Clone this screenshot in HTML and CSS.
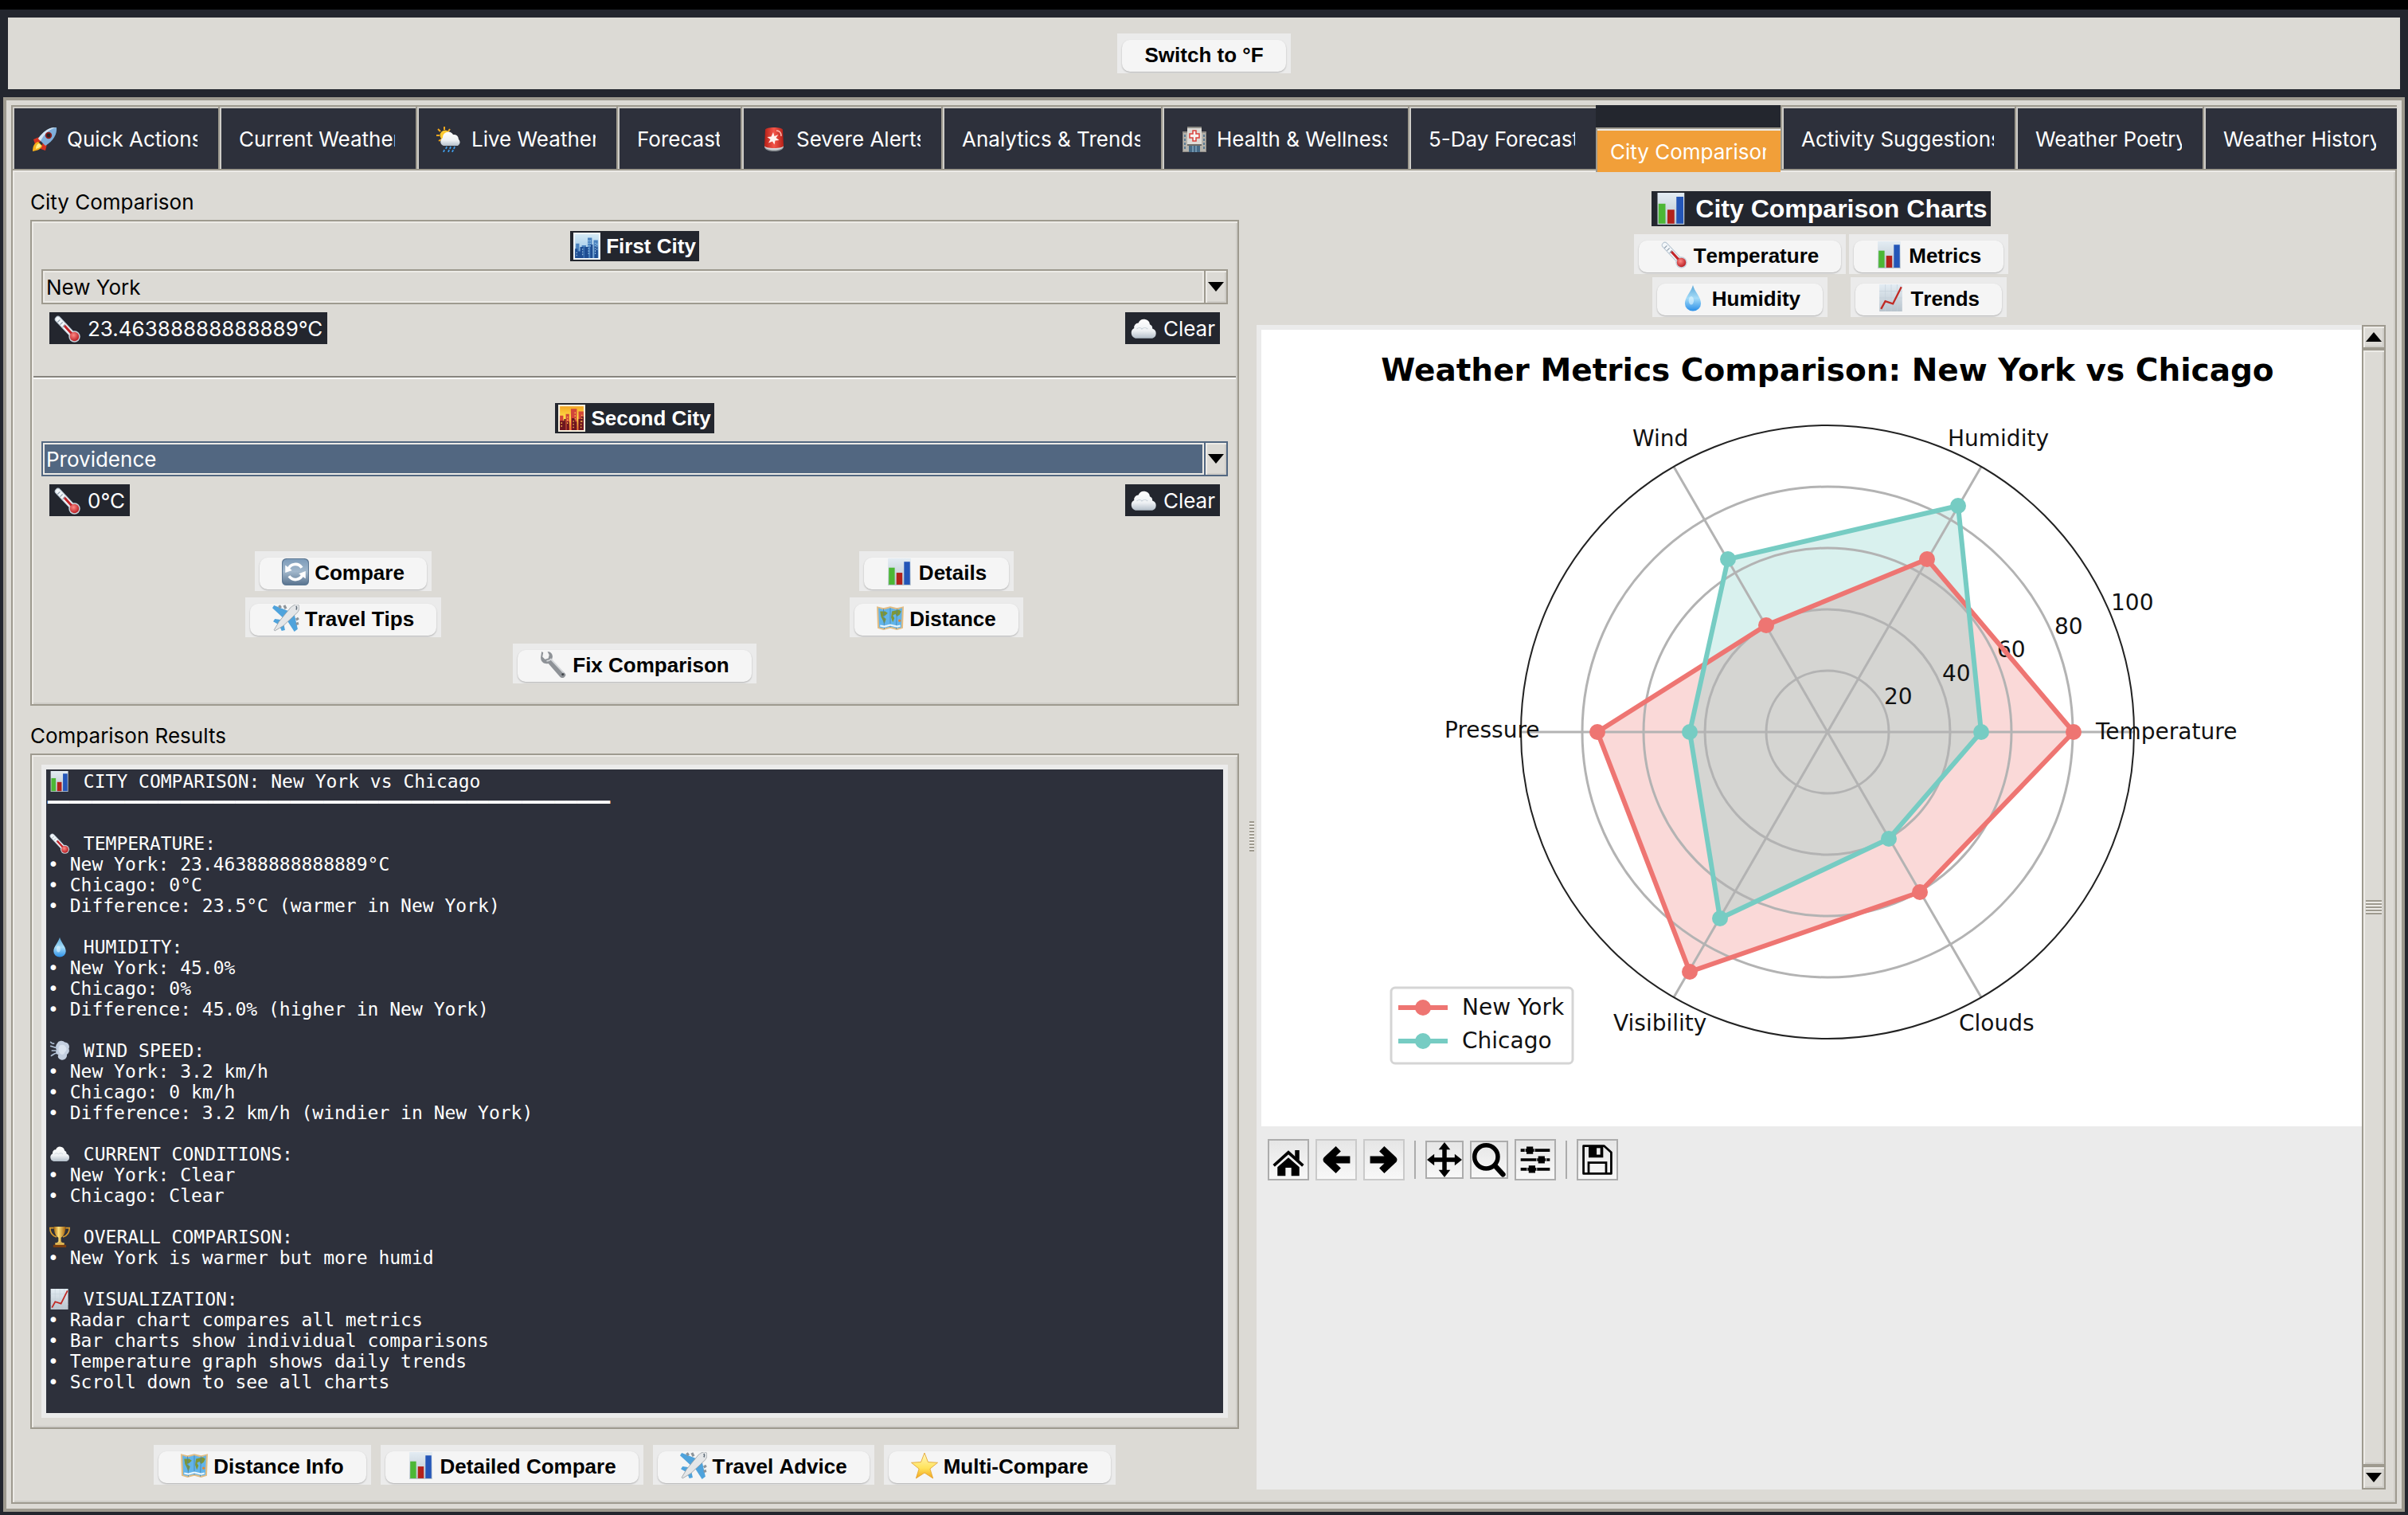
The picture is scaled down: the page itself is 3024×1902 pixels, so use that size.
FILE: index.html
```html
<!DOCTYPE html>
<html lang="en">
<head>
<meta charset="utf-8">
<title>Weather Dashboard - City Comparison</title>
<link rel="stylesheet" href="styles.css">
</head>
<body>
<svg class="sprite" width="0" height="0" aria-hidden="true">
  <defs>
    <linearGradient id="g-paper" x1="0" y1="0" x2="0" y2="1"><stop offset="0" stop-color="#e3ecf3"/><stop offset="1" stop-color="#b9c4cd"/></linearGradient>
    <linearGradient id="g-drop" x1="0" y1="0" x2="0" y2="1"><stop offset="0" stop-color="#5aa7d8"/><stop offset=".5" stop-color="#a5dcf8"/><stop offset="1" stop-color="#2a8fe8"/></linearGradient>
    <linearGradient id="g-cloud" x1="0" y1="0" x2="0" y2="1"><stop offset="0" stop-color="#ffffff"/><stop offset=".6" stop-color="#eef1f4"/><stop offset="1" stop-color="#b4bfca"/></linearGradient>
    <linearGradient id="g-sky" x1="0" y1="0" x2="0" y2="1"><stop offset="0" stop-color="#d3e9f5"/><stop offset="1" stop-color="#8dbbe2"/></linearGradient>
    <linearGradient id="g-dusk" x1="0" y1="0" x2="0" y2="1"><stop offset="0" stop-color="#f5a623"/><stop offset=".5" stop-color="#ffe14a"/><stop offset="1" stop-color="#e8702a"/></linearGradient>
    <linearGradient id="g-steel" x1="0" y1="0" x2="0" y2="1"><stop offset="0" stop-color="#7d9cba"/><stop offset=".5" stop-color="#a2b8cc"/><stop offset="1" stop-color="#5f7994"/></linearGradient>
    <linearGradient id="g-gold" x1="0" y1="0" x2="1" y2="0"><stop offset="0" stop-color="#a8690f"/><stop offset=".4" stop-color="#ffe07a"/><stop offset="1" stop-color="#a4610c"/></linearGradient>
    <linearGradient id="g-star" x1="0" y1="0" x2="0" y2="1"><stop offset="0" stop-color="#fff7c4"/><stop offset=".6" stop-color="#ffe35a"/><stop offset="1" stop-color="#f3a51e"/></linearGradient>
    <linearGradient id="g-red" x1="0" y1="0" x2="1" y2="0"><stop offset="0" stop-color="#b51f16"/><stop offset=".5" stop-color="#f4564a"/><stop offset="1" stop-color="#b51f16"/></linearGradient>
    <radialGradient id="g-bulb" cx=".4" cy=".35" r=".7"><stop offset="0" stop-color="#ff8a85"/><stop offset="1" stop-color="#b5171d"/></radialGradient>
  </defs>
  <symbol id="i-chart" viewBox="0 0 32 32">
    <rect x="2" y="0" width="27" height="32" fill="url(#g-paper)"/>
    <rect x="3" y="11" width="7" height="20" fill="#4cb735"/><rect x="12" y="17" width="7" height="14" fill="#b3221b"/><rect x="21" y="4" width="7" height="27" fill="#2456b8"/>
  </symbol>
  <symbol id="i-trend" viewBox="0 0 32 32">
    <rect x="2" y="0" width="27" height="32" fill="url(#g-paper)"/>
    <path d="M2 8h27M2 16h27M2 24h27M9 0v32M16 0v32M23 0v32" stroke="#c3cfd9" stroke-width=".6"/>
    <path d="M4 29 9 20 18 23 28 3" fill="none" stroke="#c02a24" stroke-width="2.2"/>
  </symbol>
  <symbol id="i-thermo" viewBox="0 0 32 32">
    <path d="M4.500 4.500 21 22" stroke="#b9c6d2" stroke-width="7.500" stroke-linecap="round"/>
    <path d="M4.500 4.500 21 22" stroke="#f3f7fa" stroke-width="5.500" stroke-linecap="round"/>
    <circle cx="24" cy="25" r="6.800" fill="#c7cfd8"/>
    <path d="M12.500 12.500 23 24" stroke="#c3252a" stroke-width="3" stroke-linecap="round"/>
    <circle cx="24" cy="25" r="5.400" fill="url(#g-bulb)"/>
    <path d="M4 8l3-3M7 11l3-3M10 14l3-3" stroke="#8f9dab" stroke-width="1"/>
  </symbol>
  <symbol id="i-drop" viewBox="0 0 32 32">
    <path d="M16 1C18 9 25.500 15 25.500 22.500a9.500 9 0 0 1-19 0C6.500 15 14 9 16 1z" fill="url(#g-drop)"/>
    <ellipse cx="14" cy="19" rx="3" ry="5" fill="#e4f6ff" opacity=".6"/>
  </symbol>
  <symbol id="i-cloud" viewBox="0 0 32 32">
    <path d="M6.500 27a6.500 6.500 0 0 1-1.500-12 5 5 0 0 1 5-6 7 7 0 0 1 13.500 1.500 5 5 0 0 1 3 5 6 6 0 0 1 0 11.500z" fill="url(#g-cloud)"/>
    <path d="M8 16c2-2 5-2 6 0 2-2 5-2 7 0" fill="none" stroke="#c9d2da" stroke-width="1"/>
  </symbol>
  <symbol id="i-wind" viewBox="0 0 32 32">
    <path d="M12 5a7 6 0 0 1 12-2 7 7 0 0 1 6 10 7 7 0 0 1-3 9 7 7 0 0 1-9 8c-4-1-6-5-4-8-4 0-5-4-3-7-2-3-1-8 1-10z" fill="#c3cfe0"/>
    <path d="M16 8a6 5 0 0 1 9 2c3 3 1 7-1 8-1 4-5 5-7 3-3-3-4-9-1-13z" fill="#dbe4f0"/>
    <path d="M11 11C8 12 5 9 2 9M11 16H4M11 20c-3 0-5 2-8 4M7 5C5 6 4 5 2 3" fill="none" stroke="#aebfd4" stroke-width="2" stroke-linecap="round"/>
  </symbol>
  <symbol id="i-rocket" viewBox="0 0 32 32">
    <path d="M9 13 2 16l2 6 8-4zM19 22l-2 8-6-2 3-8z" fill="#d8321f"/>
    <path d="M8 19c-5 1-7 6-7 12 6-1 11-3 12-7z" fill="#f7b11c"/><path d="M9 21c-3 1-4 4-4 7 3-1 6-2 7-4z" fill="#fff08a"/>
    <path d="M31 1c1 8-4 17-14 23l-9-9C14 6 22 0 31 1z" fill="#7faeda"/>
    <path d="M31 1c-7 1-15 7-20 17l-3-3C14 6 22 0 31 1z" fill="#d3e4f2"/>
    <circle cx="21" cy="11" r="4.200" fill="#8c1d1a"/><circle cx="21" cy="11" r="2.400" fill="#20242c"/>
  </symbol>
  <symbol id="i-rain" viewBox="0 0 32 32">
    <path d="M10 0v4M2 3l3 3M0 11h4M17 3l-2 3M3 18l3-2" stroke="#f3a81f" stroke-width="2"/>
    <circle cx="11" cy="11" r="6.500" fill="#fdc92f"/>
    <path d="M9 24a5.500 5.500 0 0 1-1-10 7 7 0 0 1 13-4 6 6 0 0 1 7 6 5 5 0 0 1-1 8z" fill="url(#g-cloud)"/>
    <path d="M13 25l-1 3M18 25l-1 3M23 25l-1 3M10 29l-1 3M16 29l-1 3M21 29l-1 3" stroke="#3f9be6" stroke-width="1.800"/>
  </symbol>
  <symbol id="i-siren" viewBox="0 0 32 32">
    <path d="M4 25c0 8 24 8 24 0z" fill="#8d9296"/><path d="M4 24c0 7 24 7 24 0l-1-3H5z" fill="#d5d8da"/>
    <path d="M5 4c0-4 22-4 22 0l1 20c0 4-24 4-24 0z" fill="url(#g-red)"/>
    <path d="M15 7l1.500 5 5-2-3 4 4 3-5 .5-1 5-2.500-4-5 2 2.500-4.500-4-3 5-.5z" fill="#fff3ef"/>
    <path d="M19 5c4 0 6 3 6 7" fill="none" stroke="#ffb8ae" stroke-width="1.500"/>
  </symbol>
  <symbol id="i-hospital" viewBox="0 0 32 32">
    <rect x="1" y="6" width="30" height="26" fill="#8f8c86"/><rect x="2" y="8" width="28" height="23" fill="#b5b2ab"/>
    <rect x="7" y="0" width="18" height="23" fill="#dddbd6"/><rect x="7" y="0" width="18" height="2" fill="#8d8b86"/>
    <path d="M14 5h4v4h4v5h-4v4h-4v-4h-4V9h4z" fill="#f6f2ef" stroke="#d8413c" stroke-width="1.500"/>
    <path d="M3 10h2v3H3zM3 15h2v3H3zM3 20h2v3H3zM3 25h2v3H3zM27 10h2v3h-2zM27 15h2v3h-2zM27 20h2v3h-2zM27 25h2v3h-2z" fill="#5c7b94"/>
    <rect x="9" y="23" width="14" height="9" fill="#456a86"/><path d="M14 24v8M18 24v8" stroke="#9fc0d6"/><rect x="7" y="22" width="18" height="2" fill="#6d6b67"/>
  </symbol>
  <symbol id="i-city" viewBox="0 0 32 32">
    <rect width="32" height="32" fill="#eef3f6"/><rect x="2" y="2" width="28" height="28" fill="url(#g-sky)"/>
    <path d="M3 13h4v17H3zM10 15h5v15h-5zM17 6h5v24h-5zM24 9h5v21h-5z" fill="#4a82bf"/>
    <path d="M2 19h3v3h3v-5h4v13H2zM13 17h5v13h-5zM20 14h3v16h-3zM25 16h4v14h-4z" fill="#1f4e93"/>
    <path d="M4 23v5M11 19v8M18 9v18M20 9v8M26 12v14M28 13v9" stroke="#a9d0ee" stroke-width="1" stroke-dasharray="1.500 1.500"/>
  </symbol>
  <symbol id="i-sunset" viewBox="0 0 32 32">
    <rect width="32" height="32" fill="#f7efdd"/><rect x="2" y="2" width="28" height="28" fill="url(#g-dusk)"/>
    <path d="M15 5h7v25h-7zM24 8h6v22h-6zM9 11h4v19H9zM2 13h4v17H2z" fill="#d2453a"/>
    <path d="M2 19h5v-2h2v13H2zM16 16h4v4h2v10h-6zM24 17h3v-3h3v16h-6zM10 20h3v10h-3z" fill="#6e1620"/>
    <path d="M4 21v7M18 19v9M20 9v9M27 19v9M11 14v10M28 12v9" stroke="#ffc14d" stroke-width="1.200" stroke-dasharray="1.500 2"/>
  </symbol>
  <symbol id="i-cycle" viewBox="0 0 32 32">
    <rect width="32" height="32" rx="5" fill="#5d7893"/><rect x="1" y="1" width="30" height="29" rx="5" fill="url(#g-steel)"/>
    <path d="M7.500 13a9 9 0 0 1 16-2M24.500 19a9 9 0 0 1-16 2" fill="none" stroke="#fff" stroke-width="3.400"/>
    <path d="M4 8v9l8-3zM28 24v-9l-8 3z" fill="#fff"/>
  </symbol>
  <symbol id="i-plane" viewBox="0 0 32 32">
    <path d="M20 8 2 1 0 4l13 12zM17 18l9 14 4-3-4-18zM11 18l-8-1-2 3 7 4zM13 21l2 9-4 1-3-7z" fill="#4fa3dc"/>
    <path d="M8 1l2 3M14 1l2 4M31 16l-3 2M31 22l-3 1" stroke="#8c949b" stroke-width="3"/>
    <path d="M30 0c3 1 2 6 0 9L13 25 3 31l-1-1 6-10L22 3c3-2 6-4 8-3z" fill="#e4e6e8" stroke="#9a9fa4" stroke-width=".8"/>
    <path d="M28 2c1 1 1 3 0 4" fill="none" stroke="#5d6a76" stroke-width="1.500"/>
  </symbol>
  <symbol id="i-map" viewBox="0 0 32 32">
    <path d="M0 2l8 2 8-2 8 2 8-2-1 26-7 2-8-2-8 2-7-2z" fill="#e2bd84"/>
    <path d="M2 4l6 2 8-2 8 2 6-2-1 23-5 1-8-2-8 2-5-1z" fill="#62b4ea"/>
    <path d="M4 8l6 0 3 2-3 3-3 1 4 3-2 6-2-5-2-4zM18 8l8-2 3 2-2 4-3 2-2-3-3 2 2 3-2 5-2-6z" fill="#7f9636"/>
    <path d="M8 5l1 24M16 4v23M24 5l-1 24" stroke="#3f7fae" stroke-width=".7"/><circle cx="27" cy="19" r="1.500" fill="#e8872c"/>
    <path d="M4 25l5 1 7-2 8 2 4-1" stroke="#e9f6fd" stroke-width="2" fill="none"/>
  </symbol>
  <symbol id="i-wrench" viewBox="0 0 32 32">
    <path d="M2 1l2 1-1 5 3 3 4-1 1-4-2-4c4 0 6 3 6 6l-1 4 15 15c2 2 2 3 0 5s-4 1-5 0L10 15c-4 1-9-1-9-7z" fill="#8e9297"/>
    <path d="M8 12c2 0 4-1 5-2l15 16" fill="none" stroke="#d4d7da" stroke-width="1.800"/><circle cx="27" cy="28" r="1.400" fill="#3e4247"/>
  </symbol>
  <symbol id="i-trophy" viewBox="0 0 32 32">
    <path d="M7 2H1c0 8 4 12 10 14M25 2h6c0 8-4 12-10 14" fill="none" stroke="#d99a2b" stroke-width="2"/>
    <path d="M7 0h18c0 9-3 15-7 17v6l3 2H11l3-2v-6C10 15 7 9 7 0z" fill="url(#g-gold)"/>
    <rect x="9" y="25" width="14" height="4" fill="#f0c65a"/><rect x="6" y="28" width="20" height="4" fill="#7a3d10"/>
  </symbol>
  <symbol id="i-star" viewBox="0 0 32 32">
    <path d="M16 1l4.200 10.800L31.500 12.500l-9 7.300L26 31l-10-6.500L6 31l3.500-11.200-9-7.300 11.300-.7z" fill="url(#g-star)" stroke="#e2a22e" stroke-width=".8"/>
  </symbol>
</svg>

<header class="topbar"><button class="btn"><span>Switch to °F</span></button></header>

<main class="notebook">
  <nav class="tabs" role="tablist">
    <button class="tab" role="tab"><span><svg><use href="#i-rocket"/></svg>Quick Actions</span></button>
    <button class="tab" role="tab"><span>Current Weather</span></button>
    <button class="tab" role="tab"><span><svg><use href="#i-rain"/></svg>Live Weather</span></button>
    <button class="tab" role="tab"><span>Forecast</span></button>
    <button class="tab" role="tab"><span><svg><use href="#i-siren"/></svg>Severe Alerts</span></button>
    <button class="tab" role="tab"><span>Analytics &amp; Trends</span></button>
    <button class="tab" role="tab"><span><svg><use href="#i-hospital"/></svg>Health &amp; Wellness</span></button>
    <button class="tab" role="tab"><span>5-Day Forecast</span></button>
    <button class="tab tab-active" role="tab" aria-selected="true"><span>City Comparison</span></button>
    <button class="tab" role="tab"><span>Activity Suggestions</span></button>
    <button class="tab" role="tab"><span>Weather Poetry</span></button>
    <button class="tab" role="tab"><span>Weather History</span></button>
  </nav>

  <div class="pane">
    <section class="left">
      <h2 class="caption">City Comparison</h2>
      <div class="frame form">
        <label class="tag tag-bold" for="city1"><svg><use href="#i-city"/></svg>First City</label>
        <div class="combo">
          <select id="city1"><option>New York</option><option>Chicago</option></select>
          <span class="arrow"><i class="down"></i></span>
        </div>
        <div class="readout">
          <span class="tag"><svg><use href="#i-thermo"/></svg>23.46388888888889°C</span>
          <span class="tag"><svg><use href="#i-cloud"/></svg>Clear</span>
        </div>
        <hr class="rule">
        <label class="tag tag-bold" for="city2"><svg><use href="#i-sunset"/></svg>Second City</label>
        <div class="combo combo-focus">
          <select id="city2"><option>Providence</option><option>Chicago</option></select>
          <span class="arrow"><i class="down"></i></span>
        </div>
        <div class="readout">
          <span class="tag"><svg><use href="#i-thermo"/></svg>0°C</span>
          <span class="tag"><svg><use href="#i-cloud"/></svg>Clear</span>
        </div>
        <div class="actions">
          <button class="btn"><span><svg><use href="#i-cycle"/></svg>Compare</span></button>
          <button class="btn"><span><svg><use href="#i-chart"/></svg>Details</span></button>
          <button class="btn"><span><svg><use href="#i-plane"/></svg>Travel Tips</span></button>
          <button class="btn"><span><svg><use href="#i-map"/></svg>Distance</span></button>
          <button class="btn wide"><span><svg><use href="#i-wrench"/></svg>Fix Comparison</span></button>
        </div>
      </div>

      <h2 class="caption">Comparison Results</h2>
      <div class="frame results">
<pre class="output"><svg><use href="#i-chart"/></svg> CITY COMPARISON: New York vs Chicago
━━━━━━━━━━━━━━━━━━━━━━━━━━━━━━━━━━━━━━━━━━━━━━━━━━━

<svg><use href="#i-thermo"/></svg> TEMPERATURE:
• New York: 23.46388888888889°C
• Chicago: 0°C
• Difference: 23.5°C (warmer in New York)

<svg><use href="#i-drop"/></svg> HUMIDITY:
• New York: 45.0%
• Chicago: 0%
• Difference: 45.0% (higher in New York)

<svg><use href="#i-wind"/></svg> WIND SPEED:
• New York: 3.2 km/h
• Chicago: 0 km/h
• Difference: 3.2 km/h (windier in New York)

<svg><use href="#i-cloud"/></svg> CURRENT CONDITIONS:
• New York: Clear
• Chicago: Clear

<svg><use href="#i-trophy"/></svg> OVERALL COMPARISON:
• New York is warmer but more humid

<svg><use href="#i-trend"/></svg> VISUALIZATION:
• Radar chart compares all metrics
• Bar charts show individual comparisons
• Temperature graph shows daily trends
• Scroll down to see all charts
</pre>
      </div>
      <div class="footer">
        <button class="btn"><span><svg><use href="#i-map"/></svg>Distance Info</span></button>
        <button class="btn"><span><svg><use href="#i-chart"/></svg>Detailed Compare</span></button>
        <button class="btn"><span><svg><use href="#i-plane"/></svg>Travel Advice</span></button>
        <button class="btn"><span><svg><use href="#i-star"/></svg>Multi-Compare</span></button>
      </div>
    </section>

    <div class="sash"><i class="grip"></i></div>

    <section class="right">
      <h1 class="title"><svg><use href="#i-chart"/></svg>City Comparison Charts</h1>
      <div class="switches">
        <button class="btn"><span><svg><use href="#i-thermo"/></svg>Temperature</span></button>
        <button class="btn"><span><svg><use href="#i-chart"/></svg>Metrics</span></button>
        <button class="btn"><span><svg><use href="#i-drop"/></svg>Humidity</span></button>
        <button class="btn"><span><svg><use href="#i-trend"/></svg>Trends</span></button>
      </div>
      <div class="viewer">
        <div class="canvas">
          <svg class="chart" viewBox="0 0 1382 1000" role="img" aria-label="Weather Metrics Comparison: New York vs Chicago">
            <rect width="1382" height="1000" fill="#fff"/>
            <text class="chart-title" x="711" y="64" text-anchor="middle">Weather Metrics Comparison: New York vs Chicago</text>
            <g transform="translate(711 505)">
              <polygon class="fill red" points="309,0 125,-217 -77,-134 -289,0 -173,301 116,201"/>
              <polygon class="fill teal" points="193,0 164,-284 -125,-217 -173,0 -135,234 77,134"/>
              <g class="grid">
                <circle r="77"/><circle r="154"/><circle r="231"/><circle r="308"/>
                <path d="M-385 0H385M-193-333 193 333M193-333-193 333"/>
              </g>
              <circle class="spine" r="385"/>
            </g>
            <g class="labels">
              <text x="1048" y="514">Temperature</text>
              <text x="862" y="146">Humidity</text>
              <text x="466" y="146">Wind</text>
              <text x="230" y="512">Pressure</text>
              <text x="442" y="880">Visibility</text>
              <text x="876" y="880">Clouds</text>
              <text x="782" y="470">20</text>
              <text x="855" y="441">40</text>
              <text x="924" y="411">60</text>
              <text x="996" y="382">80</text>
              <text x="1067" y="352">100</text>
            </g>
            <g transform="translate(711 505)">
              <g class="red">
                <polygon class="line" points="309,0 125,-217 -77,-134 -289,0 -173,301 116,201"/>
                <circle cx="309" r="10"/><circle cx="125" cy="-217" r="10"/><circle cx="-77" cy="-134" r="10"/><circle cx="-289" r="10"/><circle cx="-173" cy="301" r="10"/><circle cx="116" cy="201" r="10"/>
              </g>
              <g class="teal">
                <polygon class="line" points="193,0 164,-284 -125,-217 -173,0 -135,234 77,134"/>
                <circle cx="193" r="10"/><circle cx="164" cy="-284" r="10"/><circle cx="-125" cy="-217" r="10"/><circle cx="-173" r="10"/><circle cx="-135" cy="234" r="10"/><circle cx="77" cy="134" r="10"/>
              </g>
            </g>
            <rect x="163" y="826" width="228" height="95" rx="5" fill="#fff" stroke="#d5d5d5" stroke-width="3"/>
            <g class="red"><path class="line" d="M172 851h62"/><circle cx="203" cy="851" r="10"/></g>
            <g class="teal"><path class="line" d="M172 893h62"/><circle cx="203" cy="893" r="10"/></g>
            <g class="labels"><text x="252" y="860">New York</text><text x="252" y="902">Chicago</text></g>
          </svg>
          <div class="toolbar">
            <button aria-label="Home"><svg viewBox="0 0 48 48"><path d="M24 21 9 34v12h11V35h8v11h11V34z"/><path d="M4 32 24 14 44 32" fill="none" stroke="#000" stroke-width="4"/><path d="M33 11h6v14l-6-5z"/></svg></button>
            <button class="dim" aria-label="Back"><svg viewBox="0 0 48 48"><path d="M27 9 11 24l16 15M12 24h31" fill="none" stroke="#000" stroke-width="10" stroke-linejoin="round"/></svg></button>
            <button class="dim" aria-label="Forward"><svg viewBox="0 0 48 48"><path d="M21 9l16 15-16 15M36 24H5" fill="none" stroke="#000" stroke-width="10" stroke-linejoin="round"/></svg></button>
            <i class="sep"></i>
            <button class="small" aria-label="Pan"><svg viewBox="0 0 48 48"><path d="M24 6v36M6 24h36" stroke="#000" stroke-width="6"/><path d="M24 0l8 10H16zM24 48l8-10H16zM0 24l10-8v16zM48 24l-10-8v16z"/></svg></button>
            <button class="small" aria-label="Zoom"><svg viewBox="0 0 48 48"><circle cx="20" cy="20" r="16" fill="none" stroke="#000" stroke-width="6"/><path d="M32 32l11 12" stroke="#000" stroke-width="7" stroke-linecap="round"/></svg></button>
            <button aria-label="Subplots"><svg viewBox="0 0 48 48"><path d="M4 11h40M4 24h40M4 37h40" stroke="#000" stroke-width="4"/><path d="M12 6h9v10h-9zM28 19h9v10h-9zM15 32h9v10h-9z"/><path d="M10 9v4M23 9v4M26 22v4M39 22v4M13 35v4M26 35v4" stroke="#eee" stroke-width="1"/></svg></button>
            <i class="sep"></i>
            <button aria-label="Save"><svg viewBox="0 0 48 48"><path d="M5 5h28l10 9v29H5z" fill="none" stroke="#000" stroke-width="3" stroke-linejoin="round"/><path d="M12 5h20v16H12z"/><path d="M23 8h5v9h-5z" fill="#eee"/><path d="M12 43V28h24v15" fill="none" stroke="#000" stroke-width="3"/></svg></button>
          </div>
        </div>
        <div class="scrollbar">
          <button class="step" aria-label="Scroll up"><i class="up"></i></button>
          <div class="thumb"><i class="grip"></i></div>
          <button class="step" aria-label="Scroll down"><i class="down"></i></button>
        </div>
      </div>
    </section>
  </div>
</main>
</body>
</html>
```
FILE: styles.css
```css
:root {
  --bg: #dcdad5;
  --dark: #23262e;
  --panel: #2d303b;
  --edge: #9e9a8f;
  --light: #edebe7;
  --soft: #ebebeb;
  --focus: #526781;
}

* { box-sizing: border-box; }

body {
  margin: 0;
  min-height: 100vh;
  display: flex;
  flex-direction: column;
  border-top: 12px solid #000;
  background: var(--dark);
  color: #000;
  font: 26px/32px Inter, "Liberation Sans", sans-serif;
}

button, select { font: inherit; color: inherit; margin: 0; }
button { border: 0; padding: 0; background: none; }
svg { flex: none; }

.sprite { position: absolute; }

.topbar {
  margin: 10px 10px 0;
  padding: 20px;
  display: flex;
  justify-content: center;
  background: var(--bg);
}

/* push buttons */
.btn {
  padding: 8px 6px 2px;
  background: var(--soft);
  font: bold 26px/38px "Liberation Sans", Arial, sans-serif;
  font-kerning: none;
  white-space: nowrap;
}
.btn span {
  display: flex;
  align-items: center;
  gap: 7px;
  height: 40px;
  padding: 0 28px 2px;
  border-radius: 10px;
  background: #f5f5f5;
  box-shadow: 0 1px 2px rgba(0, 0, 0, .25);
}
.btn svg { width: 34px; height: 34px; margin-bottom: 2px; }

/* notebook */
.notebook {
  flex: 1;
  margin: 10px 4px 4px;
  padding: 6px;
  border: 4px solid var(--edge);
  display: flex;
  flex-direction: column;
  background: var(--bg);
}
.tabs {
  display: grid;
  grid-template-columns: 260fr 248fr 252fr 156fr 252fr 276fr 310fr 236fr 232fr 294fr 236fr 244fr;
  height: 80px;
  background: var(--dark);
}
.tab {
  min-width: 0;
  padding: 4px 26px 0 24px;
  border: solid var(--edge);
  border-width: 2px 0 0 2px;
  box-shadow: inset 2px 2px #cfcdc8;
  background: var(--panel);
  color: #fff;
}
.tab span {
  display: flex;
  align-items: center;
  gap: 12px;
  overflow: hidden;
  white-space: nowrap;
}
.tab svg { width: 32px; height: 32px; }
.tab-active {
  position: relative;
  z-index: 1;
  margin: 28px 0 -4px;
  padding: 4px 18px 0 16px;
  background: #f19f39;
  box-shadow: inset 0 2px var(--light);
}
.pane {
  flex: 1;
  display: grid;
  grid-template-columns: minmax(0, 1518fr) 22px minmax(0, 1418fr);
  padding: 2px 12px 2px 22px;
  border: 2px solid var(--edge);
  box-shadow: inset 2px 2px var(--light), inset -2px -2px #cfcdc8;
}

/* left side */
.left {
  display: flex;
  flex-direction: column;
  padding: 20px 0;
}
.caption { margin: 0 0 6px; padding-top: 2px; font: inherit; }
.frame {
  padding: 12px;
  border: 2px solid var(--edge);
  box-shadow: inset 2px 2px var(--light), inset -2px -2px #cfcdc8;
}
.form {
  display: flex;
  flex-direction: column;
  align-items: center;
  margin-bottom: 20px;
  padding-bottom: 26px;
}
.tag {
  display: flex;
  align-items: center;
  gap: 8px;
  height: 40px;
  padding: 2px 6px 0;
  background: var(--dark);
  color: #fff;
}
.tag svg { width: 34px; height: 34px; }
.tag-bold {
  gap: 7px;
  height: 38px;
  padding: 0 4px;
  font: bold 26px/38px "Liberation Sans", Arial, sans-serif;
}
.combo {
  align-self: stretch;
  display: flex;
  height: 44px;
  margin: 10px 0;
}
.combo select {
  flex: 1;
  appearance: none;
  padding: 2px 4px 0;
  border: 2px solid var(--edge);
  border-right-width: 1px;
  border-radius: 0;
  outline: 0;
  background: var(--bg);
  box-shadow: inset 0 0 0 2px var(--light);
}
.arrow {
  display: grid;
  place-items: center;
  width: 29px;
  border: 2px solid var(--edge);
  border-left-width: 1px;
  box-shadow: inset 2px 2px var(--light), inset -2px -2px #cfcdc8;
}
.combo-focus select { border-color: var(--focus); background: var(--focus); color: #fff; }
.combo-focus .arrow { border-color: var(--focus); }
.down, .up { width: 20px; height: 12px; background: #000; }
.down { clip-path: polygon(0 0, 100% 0, 50% 100%); }
.up { clip-path: polygon(50% 0, 100% 100%, 0 100%); }
.readout {
  align-self: stretch;
  display: flex;
  justify-content: space-between;
  padding: 0 10px;
}
.rule {
  align-self: stretch;
  height: 4px;
  margin: 40px -10px 30px;
  border: solid #87847e;
  border-width: 2px 0 0;
  background: #fff;
}
.actions {
  align-self: stretch;
  display: grid;
  grid-template-columns: 758fr 732fr;
  justify-items: center;
  gap: 8px 0;
  margin-top: 44px;
}
.wide { grid-column: 1 / -1; }
.results { flex: 1; display: flex; }
.output {
  flex: 1;
  margin: 0;
  padding: 2px;
  border: 6px solid var(--soft);
  background: var(--panel);
  color: #fff;
  font: 23px/26px "DejaVu Sans Mono", Menlo, monospace;
}
.output svg { width: 26px; height: 26px; margin: 0 3px 0 2px; vertical-align: top; }
.footer {
  display: flex;
  justify-content: center;
  gap: 12px;
  margin-top: 20px;
}

/* divider between the two sides */
.sash { display: flex; align-items: center; padding-left: 13px; }
.grip {
  height: 38px;
  width: 6px;
  background: repeating-linear-gradient(var(--edge) 0 2px, var(--light) 2px 4px);
}

/* right side */
.right {
  display: flex;
  flex-direction: column;
  align-items: center;
  padding: 24px 0 14px;
}
.title {
  display: flex;
  align-items: center;
  gap: 9px;
  height: 44px;
  margin: 0 0 10px;
  padding: 0 4px;
  background: var(--dark);
  color: #fff;
  font: bold 32px/44px "Liberation Sans", Arial, sans-serif;
}
.title svg { width: 42px; height: 40px; }
.switches {
  display: grid;
  grid-template-columns: auto auto;
  justify-items: center;
  gap: 4px;
  margin-bottom: 10px;
}
.viewer { flex: 1; align-self: stretch; display: flex; }
.canvas { flex: 1; min-width: 0; padding: 6px 0 0 6px; background: var(--soft); }
.chart { display: block; width: 100%; }
.chart text { font-family: "DejaVu Sans", Verdana, sans-serif; }
.chart-title { font-size: 39px; font-weight: bold; }
.labels { font-size: 28px; fill: #111; }
.grid { fill: none; stroke: #b3b3b3; stroke-width: 3; }
.spine { fill: none; stroke: #222; stroke-width: 2; }
.red { fill: #ee7572; stroke: none; }
.teal { fill: #76ccc3; stroke: none; }
.fill { fill-opacity: .28; }
.line { fill: none; stroke-width: 6; }
.red .line { stroke: #ee7572; }
.teal .line { stroke: #76ccc3; }

.toolbar { display: flex; align-items: center; gap: 8px; padding: 16px 8px; }
.toolbar button {
  display: grid;
  place-items: center;
  width: 52px;
  height: 52px;
  border: 2px solid #acacac;
  background: linear-gradient(#e6e6e6, #f8f8f8);
}
.toolbar .dim { border-color: #cacaca; }
.toolbar .small { width: 48px; height: 48px; }
.toolbar svg { width: 44px; height: 44px; }
.sep { width: 2px; height: 48px; margin: 0 4px; background: #acacac; }

.scrollbar {
  display: flex;
  flex-direction: column;
  gap: 4px;
  width: 30px;
  border: 2px solid var(--edge);
  background: var(--edge);
}
.step, .thumb {
  display: grid;
  place-items: center;
  background: var(--bg);
  box-shadow: inset 2px 2px var(--light), inset -2px -2px #cfcdc8;
}
.step { height: 26px; }
.thumb { flex: 1; }
.thumb .grip { width: 20px; height: 18px; }
```
